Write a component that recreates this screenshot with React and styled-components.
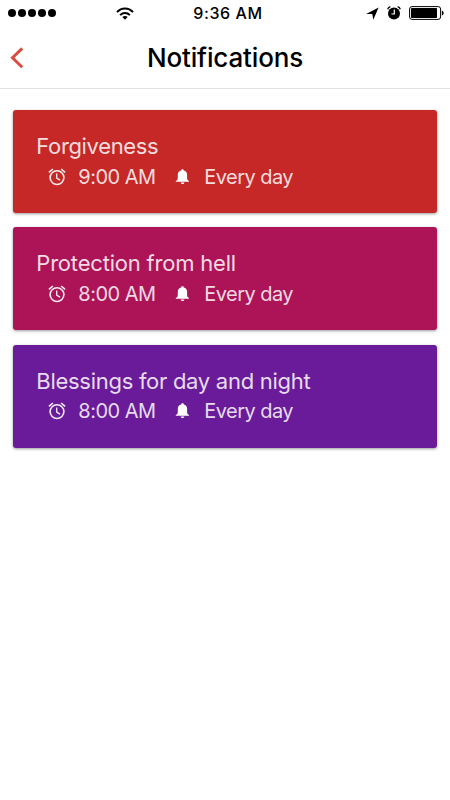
import * as React from "react";
import styled, { createGlobalStyle } from "styled-components";

const primaryText = "#000000";
const cardText = "rgba(255, 255, 255, 0.86)";
const accentRed = "#dc4a3d";
const headerBorder = "#e1e1e1";

const GlobalStyle = createGlobalStyle`
  * {
    box-sizing: border-box;
  }

  body {
    margin: 0;
    background-color: #ffffff;
    font-family: Inter, "Liberation Sans", sans-serif;
  }

  svg {
    display: block;
    flex: none;
  }
`;

const Screen = styled.div`
  display: flex;
  flex-direction: column;
  width: 100%;
  height: 800px;
  overflow: hidden;
  background-color: #ffffff;
`;

const StatusBar = styled.div`
  display: grid;
  grid-template-columns: 1fr auto 1fr;
  align-items: center;
  height: 26px;
  padding: 0 6px 0 8px;
`;

const StatusGroup = styled.div`
  display: flex;
  align-items: center;
  justify-content: ${props => (props.$end ? "flex-end" : "flex-start")};
  gap: ${props => props.$gap || "0"};
`;

const SignalDots = styled.div`
  display: flex;
  gap: 2px;
  margin-right: 60px;
`;

const Dot = styled.div`
  width: 8px;
  height: 8px;
  border-radius: 50%;
  background-color: ${primaryText};
`;

const Clock = styled.div`
  padding-left: 4px;
  font-size: 16px;
  font-weight: 500;
  line-height: 20px;
  letter-spacing: 0.6px;
  color: ${primaryText};
  white-space: nowrap;
`;

const Header = styled.div`
  display: grid;
  grid-template-columns: 40px 1fr 40px;
  align-items: center;
  height: 63px;
  border-bottom: 1px solid ${headerBorder};
`;

const BackButton = styled.button`
  padding: 2px 0 0 10px;
  border: 0;
  background: transparent;
  cursor: pointer;
`;

const HeaderText = styled.h1`
  margin: 0;
  padding-top: 2px;
  font-weight: 500;
  text-align: center;
  font-size: 26px;
  line-height: 32px;
  letter-spacing: -0.15px;
  color: ${primaryText};
  white-space: nowrap;
`;

const CardList = styled.div`
  display: flex;
  flex-direction: column;
  gap: 14.33px;
  padding: 21.1px 12.7px 0 13.3px;
`;

const Card = styled.div`
  display: flex;
  flex-direction: column;
  height: 103px;
  padding: 22px 23px 0;
  border-radius: 3px;
  color: ${cardText};
  background-color: ${props => props.$color};
  box-shadow: 0 1px 3px rgba(0, 0, 0, 0.4);
`;

const CardTitle = styled.div`
  font-size: 22px;
  font-weight: 400;
  line-height: 28px;
  letter-spacing: ${props => props.$spacing};
  white-space: nowrap;
`;

const CardDetails = styled.div`
  display: flex;
  align-items: center;
  height: 33px;
  padding-left: 12px;
`;

const DetailText = styled.div`
  width: ${props => props.$width};
  margin-left: ${props => props.$gap};
  font-size: 20px;
  font-weight: 400;
  line-height: 24px;
  letter-spacing: ${props => props.$spacing || "0"};
  white-space: nowrap;
`;

const WifiIcon = () => (
  <svg width="18" height="13" viewBox="0 0 18 13" fill="none" stroke="#000" strokeWidth="2">
    <path d="M1 5.1C5.4.2 12.6.2 17 5.1" />
    <path d="M4.1 8.1C6.9 5.2 11.1 5.2 13.9 8.1" />
    <path d="M9 12.7 6.3 10.1C7.8 8.7 10.2 8.7 11.7 10.1Z" fill="#000" stroke="none" />
  </svg>
);

const LocationIcon = () => (
  <svg width="13" height="13" viewBox="0 0 13 13">
    <path d="M12.6.4 7.3 12.8 6.3 7 .1 7Z" fill="#000" />
  </svg>
);

const StatusAlarmIcon = () => (
  <svg width="14" height="14" viewBox="0 0 14 14" fill="none">
    <circle cx="7" cy="7.6" r="6" fill="#000" />
    <path d="M.7 3.2Q1.4 1.2 3.4.7M10.6.7Q12.6 1.2 13.3 3.2" stroke="#000" strokeWidth="1.3" />
    <path d="M7.3 3.6V8H4.4" stroke="#fff" strokeWidth="1.2" />
  </svg>
);

const BatteryIcon = () => (
  <svg width="35" height="14" viewBox="0 0 35 14">
    <rect x=".6" y=".6" width="31" height="12.8" rx="2.4" fill="none" stroke="#000" strokeWidth="1" />
    <rect x="2" y="2" width="26" height="10" rx=".8" fill="#000" />
    <path d="M32.9 4.5Q34.7 5 34.7 7T32.9 9.5Z" fill="#000" />
  </svg>
);

const BackIcon = () => (
  <svg width="14" height="22" viewBox="0 0 14 22" fill="none">
    <path d="M12.2 1.4 2.5 10.8 12.2 20.2" stroke={accentRed} strokeWidth="2.9" />
  </svg>
);

const AlarmIcon = () => (
  <svg width="18" height="18" viewBox="0 0 18 18" fill="none" stroke="#fff" strokeOpacity=".92">
    <circle cx="9" cy="9.6" r="6.9" strokeWidth="1.6" />
    <path d="M.9 4.4 4.9 1M17.1 4.4 13.1 1" strokeWidth="1.6" />
    <path d="M8.7 5.6V10.1L12 12.1" strokeWidth="1.3" />
  </svg>
);

const BellIcon = () => (
  <svg width="14" height="16" viewBox="0 0 14 16" fill="#fff">
    <path d="M7.5 .3C6.7.3 6.2.8 6.2 1.4 4 1.9 2.8 3.6 2.8 5.8V8.7C2.8 10.5 2.2 11.5.8 12.1V12.8H14V12.1C12.7 11.5 12.1 10.5 12.1 8.7V5.8C12.1 3.6 10.9 1.9 8.8 1.4 8.8.8 8.3.3 7.5.3Z" />
    <path d="M5.7 13.5H9.3C9.1 14.6 8.5 15.1 7.5 15.1S5.9 14.6 5.7 13.5Z" />
  </svg>
);

const NOTIFICATIONS = [
  { title: "Forgiveness", time: "9:00 AM", repeat: "Every day", color: "#c62828", spacing: "-0.35px" },
  { title: "Protection from hell", time: "8:00 AM", repeat: "Every day", color: "#ad1457", spacing: "-0.2px" },
  { title: "Blessings for day and night", time: "8:00 AM", repeat: "Every day", color: "#6a1b9a", spacing: "-0.28px" }
];

const NotificationCard = ({ title, time, repeat, color, spacing }) => (
  <Card $color={color}>
    <CardTitle $spacing={spacing}>{title}</CardTitle>
    <CardDetails>
      <AlarmIcon />
      <DetailText $gap="12px" $width="97px" $spacing="-0.5px">{time}</DetailText>
      <BellIcon />
      <DetailText $gap="15px" $spacing="-0.55px">{repeat}</DetailText>
    </CardDetails>
  </Card>
);

const App = () => (
  <Screen>
    <GlobalStyle />
    <StatusBar>
      <StatusGroup>
        <SignalDots>
          {[0, 1, 2, 3, 4].map(dot => <Dot key={dot} />)}
        </SignalDots>
        <WifiIcon />
      </StatusGroup>
      <Clock>9:36 AM</Clock>
      <StatusGroup $end $gap="8px">
        <LocationIcon />
        <StatusAlarmIcon />
        <BatteryIcon />
      </StatusGroup>
    </StatusBar>
    <Header>
      <BackButton aria-label="Back">
        <BackIcon />
      </BackButton>
      <HeaderText>Notifications</HeaderText>
    </Header>
    <CardList>
      {NOTIFICATIONS.map(item => (
        <NotificationCard key={item.title} {...item} />
      ))}
    </CardList>
  </Screen>
);

export default App;
